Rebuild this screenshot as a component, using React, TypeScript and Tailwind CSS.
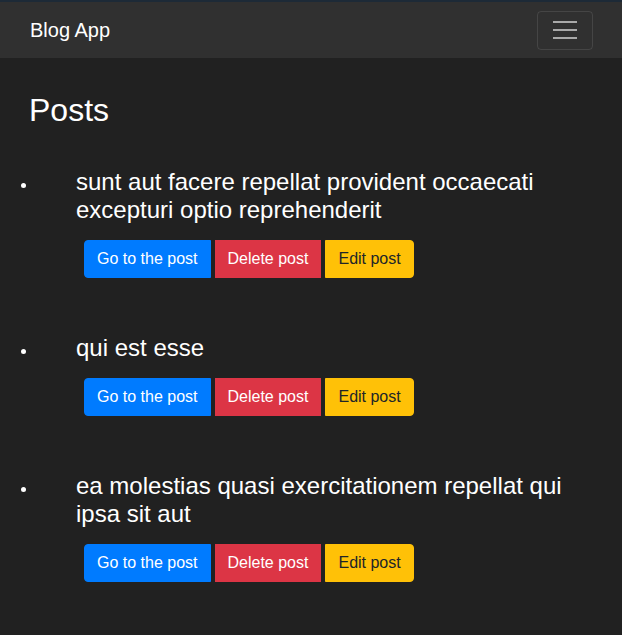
const POSTS = [
  "sunt aut facere repellat provident occaecati excepturi optio reprehenderit",
  "qui est esse",
  "ea molestias quasi exercitationem repellat qui ipsa sit aut",
];

export default function App() {
  return (
    <div className="min-h-[635px] bg-[#212121] font-['Liberation_Sans',Arial,sans-serif] text-white">
      <nav className="flex h-[58px] items-center justify-between border-t-2 border-[#1d2a37] bg-[#303030] pl-[30px] pr-[29px]">
        <span className="text-[20px] leading-[30px]">Blog App</span>
        <button className="flex h-[39px] w-[56px] flex-col items-center justify-center gap-[6px] rounded-[4px] border border-white/10">
          <span className="block h-[2px] w-[24px] bg-[#a9a9a9]" />
          <span className="block h-[2px] w-[24px] bg-[#a9a9a9]" />
          <span className="block h-[2px] w-[24px] bg-[#a9a9a9]" />
        </button>
      </nav>

      <main className="pt-[33px]">
        <h1 className="pl-[29px] text-[32px] leading-[38px]">Posts</h1>
        <ul className="mt-[39px] list-disc pl-[37px] pr-[40px]">
          {POSTS.map((title) => (
            <li key={title} className="mb-[56px] text-base">
              <div className="pl-[39px]">
                <h4 className="text-[24px] leading-[28px]">{title}</h4>
                <div className="mt-[16px] flex gap-[4px] pl-[8px]">
                  <button className="h-[38px] rounded-l-[4px] border border-[#007bff] bg-[#007bff] px-3 text-base leading-6 text-white">
                    Go to the post
                  </button>
                  <button className="h-[38px] border border-[#dc3545] bg-[#dc3545] px-3 text-base leading-6 text-white">
                    Delete post
                  </button>
                  <button className="h-[38px] rounded-r-[4px] border border-[#ffc107] bg-[#ffc107] px-3 text-base leading-6 text-[#212529]">
                    Edit post
                  </button>
                </div>
              </div>
            </li>
          ))}
        </ul>
      </main>
    </div>
  );
}
